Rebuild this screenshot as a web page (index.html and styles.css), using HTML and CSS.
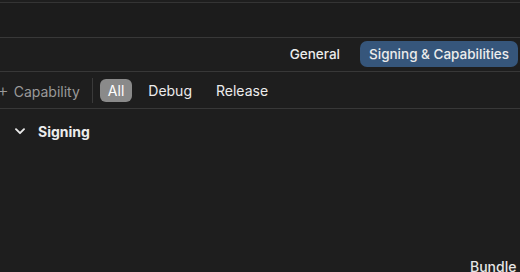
FILE: index.html
```html
<!DOCTYPE html>
<html lang="en">
<head>
    <meta charset="UTF-8">
    <title>Signing &amp; Capabilities</title>
    <link rel="stylesheet" href="styles.css">
</head>
<body>
    <div class="top-bar"></div>

    <div class="tab-bar">
        <div class="tab">General</div>
        <div class="tab active">Signing &amp; Capabilities</div>
    </div>

    <div class="filter-bar">
        <div class="add-cap"><span class="plus">+</span> Capability</div>
        <div class="divider"></div>
        <div class="filter selected">All</div>
        <div class="filter">Debug</div>
        <div class="filter">Release</div>
    </div>

    <div class="content">
        <div class="section-title">
            <svg class="chevron" width="10" height="7" viewBox="0 0 10 7">
                <path d="M1 1.2 L5 5.2 L9 1.2" fill="none" stroke="#e8e8e8" stroke-width="1.9" stroke-linecap="round" stroke-linejoin="round"/>
            </svg>
            <span>Signing</span>
        </div>
        <div class="field-row">
            <span class="field-label">Bundle Identifier</span>
        </div>
    </div>
</body>
</html>
```

FILE: styles.css
```css
body {
    margin: 0;
    background: #1e1e1e;
    font-family: 'Inter', 'Noto Sans', sans-serif;
    color: #e6e6e6;
    overflow: hidden;
    height: 272px;
}
.top-bar {
    height: 34px;
    border-top: 1px solid #343434;
    margin-top: 2px;
    border-bottom: 1px solid #383838;
    background: #1c1c1c;
}
.tab-bar {
    display: flex;
    justify-content: flex-end;
    align-items: center;
    gap: 11px;
    height: 33px;
    padding-right: 2px;
    border-bottom: 1px solid #383838;
}
.tab {
    font-size: 13.5px;
    font-weight: 500;
    padding: 5px 9px;
    border-radius: 7px;
    color: #ececec;
    height: 16px;
    line-height: 16px;
    margin-top: -1px;
}
.tab.active {
    background: #36567b;
}
.filter-bar {
    display: flex;
    align-items: center;
    height: 36px;
    border-bottom: 1px solid #383838;
}
.add-cap {
    font-size: 14px;
    color: #9a9a9a;
    margin-left: -3px;
    padding-right: 12px;
}
.plus {
    font-weight: 300;
    font-size: 18px;
    margin-right: 1px;
}
.divider {
    width: 1px;
    height: 25px;
    background: #3a3a3a;
    margin-right: 7px;
}
.filter {
    font-size: 14px;
    color: #ececec;
    padding: 3px 8px;
    margin-right: 8px;
    border-radius: 6px;
}
.filter.selected {
    background: #8a8a8a;
    color: #fff;
}
.content {
    padding: 14px 0 0 15px;
    position: relative;
    height: 150px;
}
.section-title {
    display: flex;
    align-items: center;
    gap: 13px;
    font-weight: 700;
    font-size: 14px;
    color: #ececec;
}
.field-row {
    position: absolute;
    left: 470px;
    top: 149px;
    font-size: 14px;
    font-weight: 500;
    white-space: nowrap;
    color: #e6e6e6;
}
```
